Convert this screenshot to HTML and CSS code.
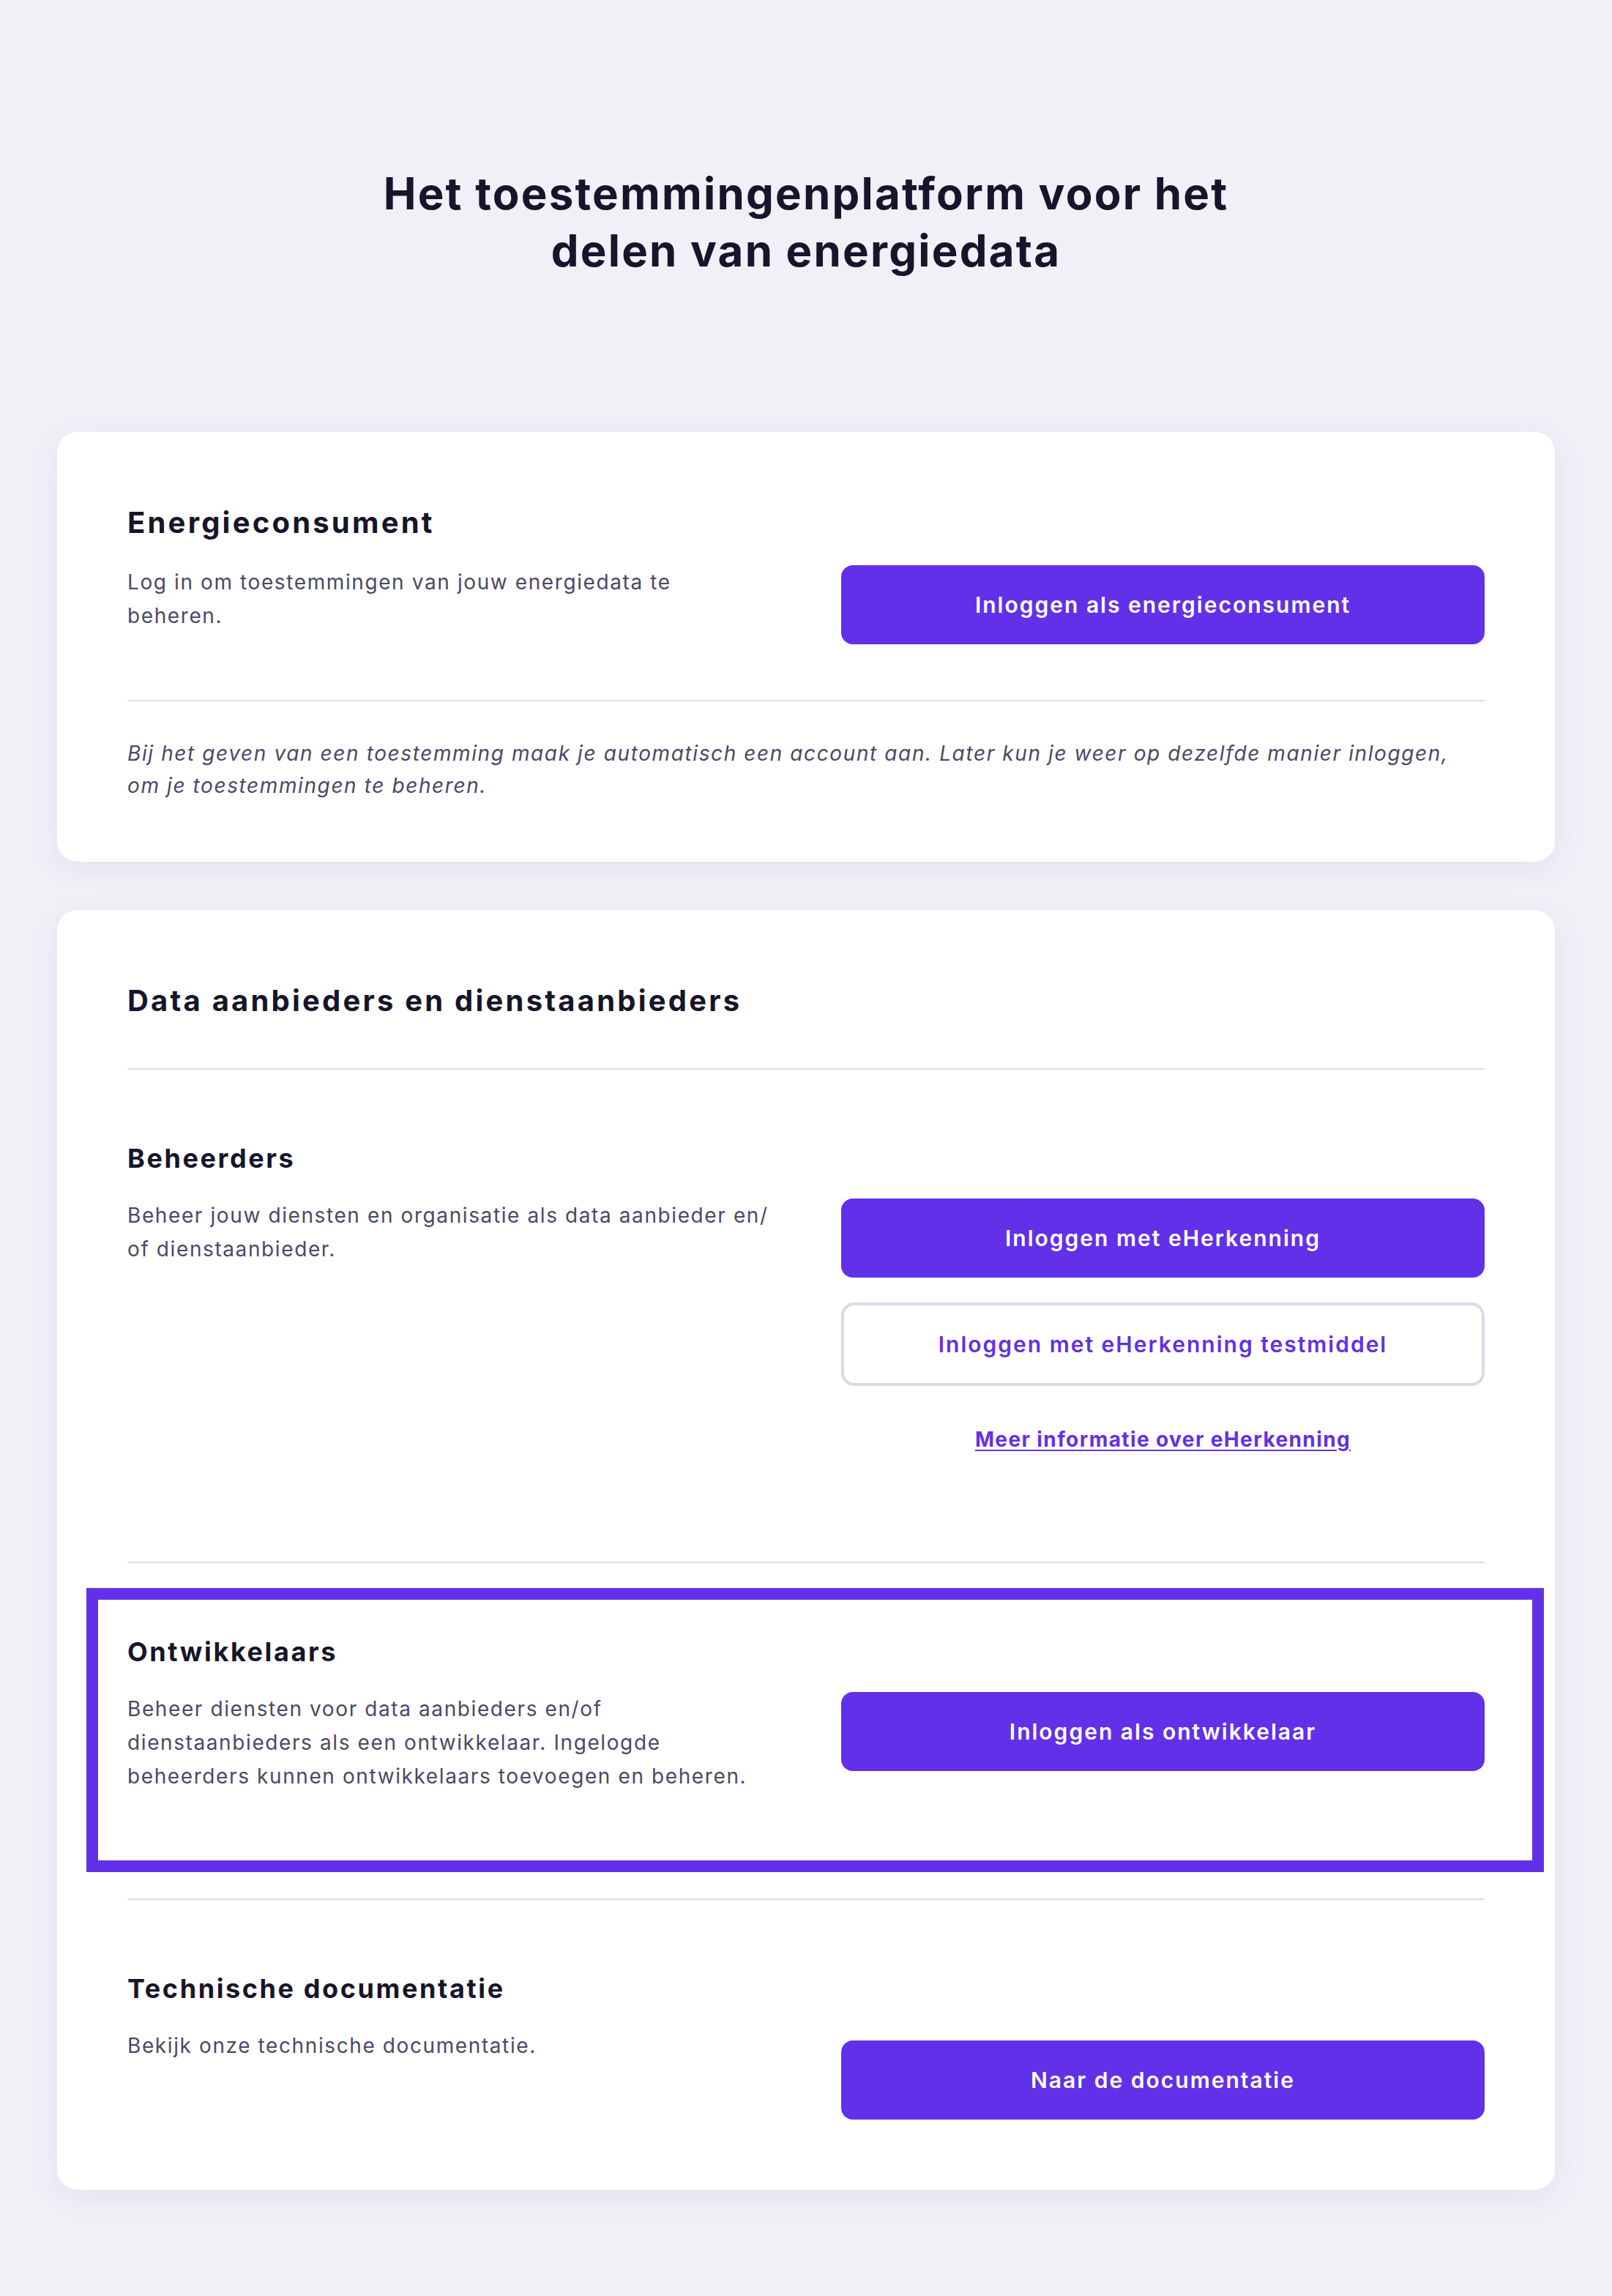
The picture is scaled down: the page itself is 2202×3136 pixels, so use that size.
FILE: index.html
```html
<!DOCTYPE html>
<html lang="nl">
<head>
  <meta charset="utf-8">
  <title>Toestemmingenplatform energiedata</title>
  <link rel="stylesheet" href="styles.css">
</head>
<body>
  <main class="page">
    <h1 class="page-title">Het toestemmingenplatform voor het delen van energiedata</h1>

    <section class="card card-consumer">
      <h2 class="card-title">Energieconsument</h2>
      <div class="row">
        <p class="desc">Log in om toestemmingen van jouw energiedata te beheren.</p>
        <div class="actions">
          <a class="btn btn-primary" href="#">Inloggen als energieconsument</a>
        </div>
      </div>
      <hr class="divider">
      <p class="note">Bij het geven van een toestemming maak je automatisch een account aan. Later kun je weer op dezelfde manier inloggen, om je toestemmingen te beheren.</p>
    </section>

    <section class="card">
      <h2 class="card-title card-title-split">Data aanbieders en dienstaanbieders</h2>

      <div class="group">
        <h3 class="group-title">Beheerders</h3>
        <div class="row">
          <p class="desc">Beheer jouw diensten en organisatie als data aanbieder en/<wbr>of dienstaanbieder.</p>
          <div class="actions">
            <a class="btn btn-primary" href="#">Inloggen met eHerkenning</a>
            <a class="btn btn-outline" href="#">Inloggen met eHerkenning testmiddel</a>
            <a class="more-link" href="#">Meer informatie over eHerkenning</a>
          </div>
        </div>
      </div>

      <div class="group group-highlight">
        <h3 class="group-title">Ontwikkelaars</h3>
        <div class="row">
          <p class="desc">Beheer diensten voor data aanbieders en/of dienstaanbieders als een ontwikkelaar. Ingelogde beheerders kunnen ontwikkelaars toevoegen en beheren.</p>
          <div class="actions">
            <a class="btn btn-primary" href="#">Inloggen als ontwikkelaar</a>
          </div>
        </div>
      </div>

      <div class="group">
        <h3 class="group-title">Technische documentatie</h3>
        <div class="row">
          <p class="desc">Bekijk onze technische documentatie.</p>
          <div class="actions actions-low">
            <a class="btn btn-primary" href="#">Naar de documentatie</a>
          </div>
        </div>
      </div>
    </section>
  </main>
</body>
</html>
```

FILE: styles.css
```css
body {
  margin: 0;
  background-color: #f1f0f7;
  font-family: Inter, "Noto Sans", Arial, sans-serif;
  color: #4b4867;
}

.page {
  padding: 225px 78px 144px;
}

.page-title {
  max-width: 1240px;
  margin: 0 auto 209px;
  text-align: center;
  font-size: 60px;
  line-height: 78px;
  font-weight: 700;
  letter-spacing: 2.2px;
  color: #16152b;
}

.card {
  background-color: #ffffff;
  border-radius: 28px;
  padding: 96px 96px 96px;
  box-shadow: 0 10px 40px rgba(60, 50, 140, 0.08);
  margin-bottom: 66px;
}

.card:last-child {
  margin-bottom: 0;
}

.card-consumer {
  padding-bottom: 82px;
}

.card-title {
  margin: 0 0 30px;
  font-size: 40px;
  line-height: 56px;
  font-weight: 700;
  letter-spacing: 3.2px;
  color: #16152b;
}

.card-title-split {
  margin-bottom: 64px;
}

.row {
  display: grid;
  grid-template-columns: 1fr 1fr;
  gap: 96px;
  align-items: start;
}

.desc {
  margin: 0;
  font-size: 28px;
  line-height: 46px;
  letter-spacing: 1.6px;
}

.card-consumer .desc {
  max-width: 840px;
}

.actions {
  display: flex;
  flex-direction: column;
  gap: 34px;
}

.actions-low {
  margin-top: 16px;
}

.btn {
  display: flex;
  align-items: center;
  justify-content: center;
  height: 108px;
  border-radius: 16px;
  font-size: 30px;
  font-weight: 600;
  letter-spacing: 2px;
  text-decoration: none;
  box-sizing: border-box;
}

.btn-primary {
  background-color: #6230e8;
  color: #ffffff;
}

.btn-outline {
  height: 114px;
  background-color: #ffffff;
  border: 4px solid #d9d9e8;
  border-radius: 18px;
  color: #6230e8;
}

.more-link {
  margin-top: 16px;
  text-align: center;
  font-size: 28px;
  line-height: 46px;
  font-weight: 700;
  letter-spacing: 1.4px;
  color: #6230e8;
  text-decoration: underline;
  text-underline-offset: 4px;
}

.divider {
  margin: 76px 0 49px;
  border: 0;
  border-top: 2px solid #dcdce8;
}

.note {
  margin: 0;
  font-size: 28px;
  line-height: 44px;
  font-style: italic;
  letter-spacing: 1.6px;
}

.group {
  position: relative;
  padding: 96px 0 144px;
  border-top: 2px solid #dcdce8;
}

.group:last-child {
  padding-bottom: 0;
}

.group-title {
  margin: 0 0 30px;
  font-size: 36px;
  line-height: 50px;
  font-weight: 700;
  letter-spacing: 2.6px;
  color: #16152b;
}

/* frame drawn over the developer block */
.group-highlight::after {
  content: "";
  position: absolute;
  top: 34px;
  bottom: 36px;
  left: -56px;
  right: -81px;
  border: 16px solid #6230e8;
  pointer-events: none;
}
```
